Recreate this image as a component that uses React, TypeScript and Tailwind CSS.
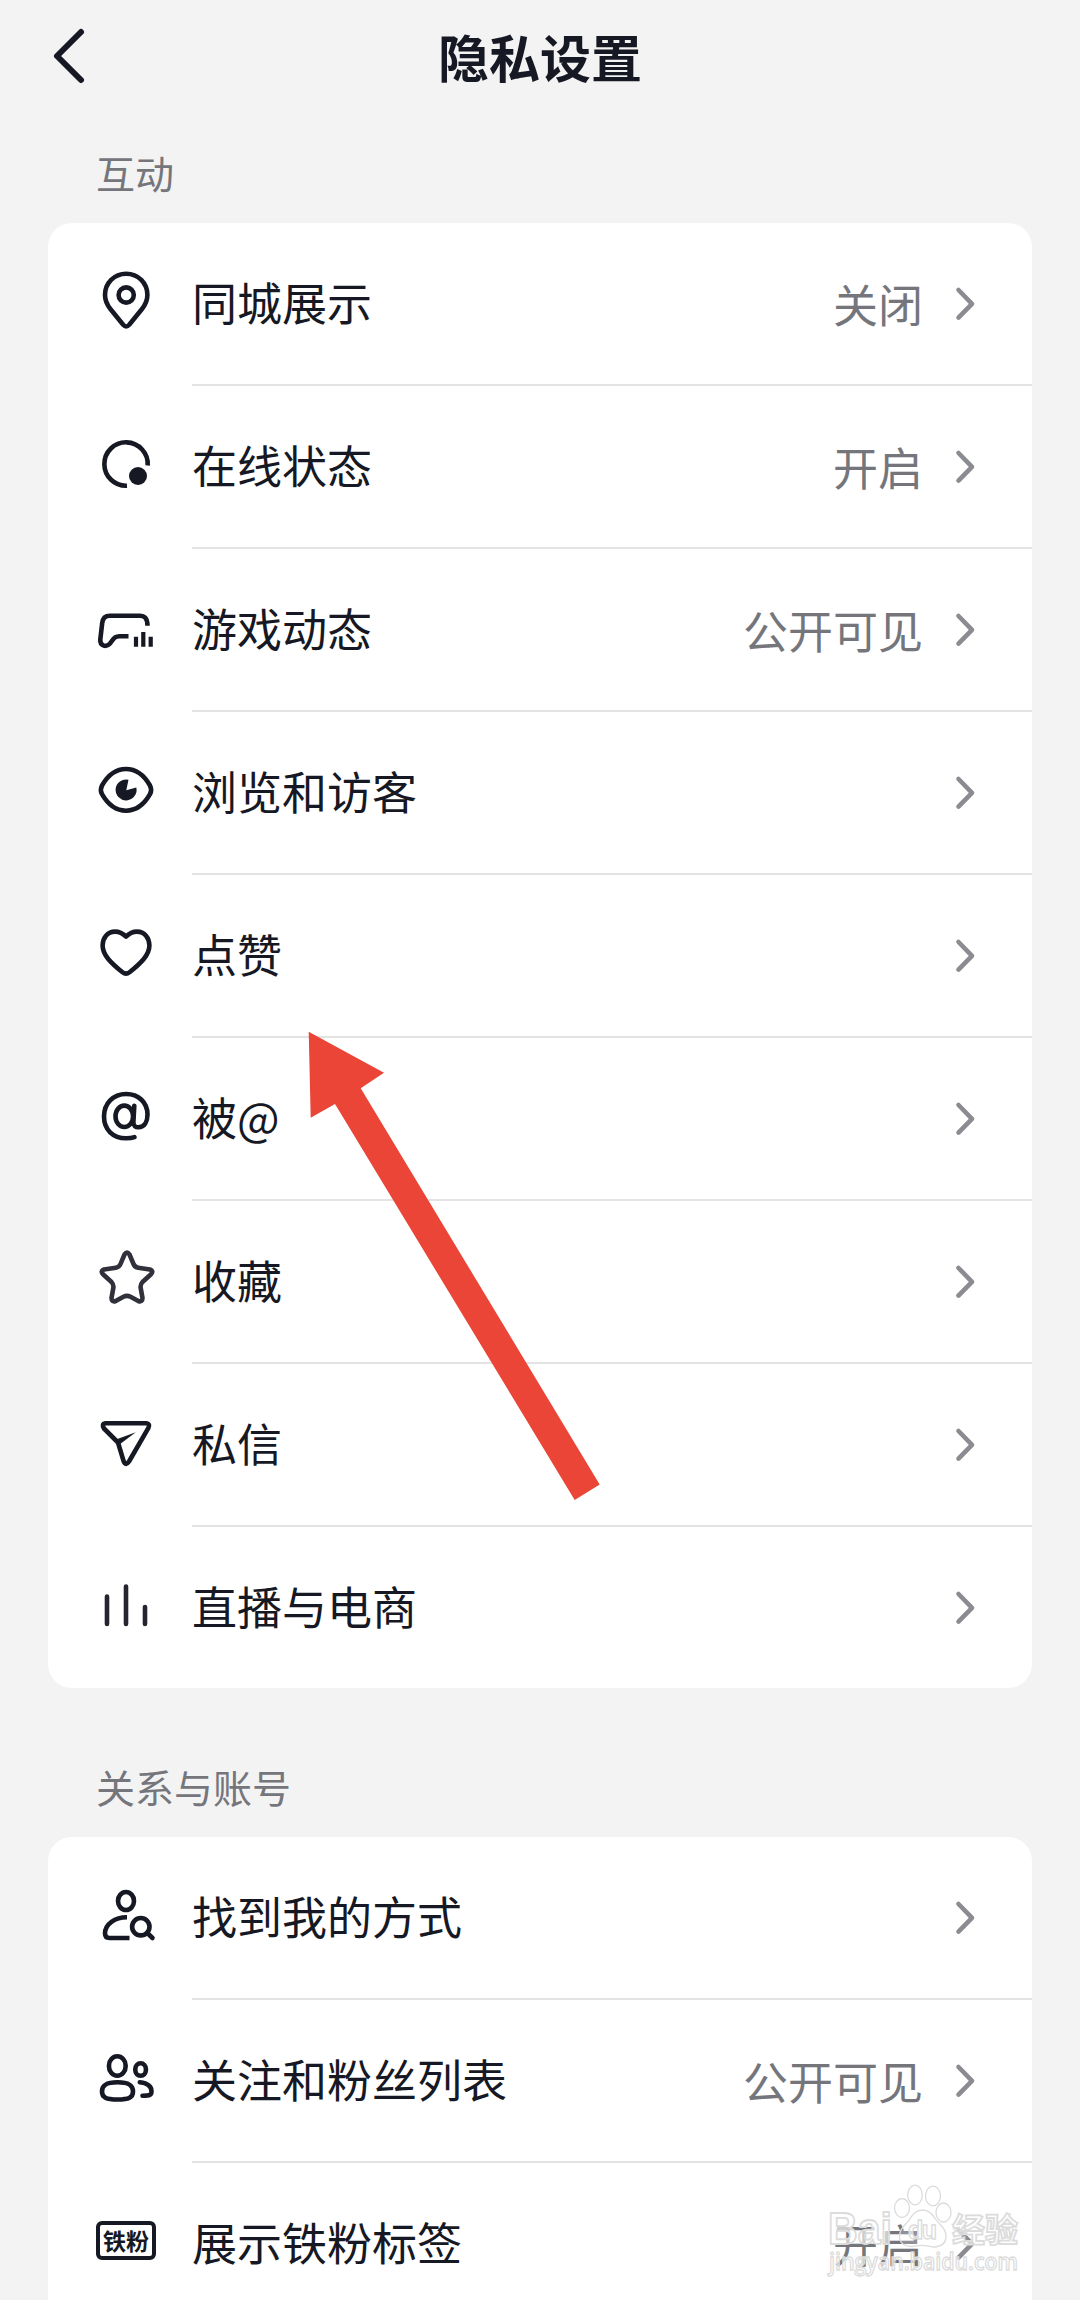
import type { ReactNode } from "react"

type Item = {
  label: string
  icon: ReactNode
  value?: string
}

const Icon = ({ children, className = "text-[#161823]" }: { children: ReactNode; className?: string }) => (
  <svg
    viewBox="0 0 60 60"
    className={`size-[60px] shrink-0 ${className}`}
    fill="none"
    stroke="currentColor"
    strokeWidth={4.6}
    strokeLinejoin="round"
  >
    {children}
  </svg>
)

const interactionItems: Item[] = [
  {
    label: "同城展示",
    value: "关闭",
    icon: (
      <Icon>
        <path d="M30.2 3.7C18.2 3.7 9 13.2 9 25c0 5.8 2 9.8 5.6 14.2L27.2 54.8q3 3.4 6 0L45.8 39.2C49.4 34.8 51.4 30.8 51.4 25 51.4 13.2 42.2 3.7 30.2 3.7Z" />
        <circle cx="30.2" cy="25" r="7.6" />
      </Icon>
    ),
  },
  {
    label: "在线状态",
    value: "开启",
    icon: (
      <Icon>
        <path d="M51.7 32.5A21.7 21.7 0 1 0 31 52.7" />
        <circle cx="42" cy="43" r="9" fill="currentColor" stroke="none" />
      </Icon>
    ),
  },
  {
    label: "游戏动态",
    value: "公开可见",
    icon: (
      <Icon>
        <path d="M51.5 29.7C51.5 22.5 49 19.7 43.5 19.7H14C9 19.7 6.7 22 6.2 27L4.3 43.5C3.8 50.5 10.5 51.5 14 47.5 18 42.5 18.5 40.3 23.5 40.3H32.5" />
        <path strokeWidth={4.2} d="M40 40.7v10M47.3 36v14.7M54.7 40.7v10" />
      </Icon>
    ),
  },
  {
    label: "浏览和访客",
    icon: (
      <Icon>
        <path d="M6 26.5C12 16 20 10 30 10s18 6 24 16.5Q56.3 31 54 35.2C48 45.7 40 51.7 30 51.7S12 45.7 6 35.2Q3.7 31 6 26.5Z" />
        <path
          d="M32.5 20.7 30.3 31.3 40.3 28.5A10.5 10.5 0 1 1 32.5 20.7Z"
          fill="currentColor"
          stroke="none"
        />
      </Icon>
    ),
  },
  {
    label: "点赞",
    icon: (
      <Icon>
        <path d="M30 14.5C26.5 11 23 9.6 19 9.6 11.5 9.6 6.6 15.8 6.6 23.5 6.6 33 15 41 26.5 50.3Q30 53 33.5 50.3C45 41 53.4 33 53.4 23.5 53.4 15.8 48.5 9.6 41 9.6 37 9.6 33.5 11 30 14.5Z" />
      </Icon>
    ),
  },
  {
    label: "被@",
    icon: (
      <Icon>
        <ellipse cx="28.3" cy="31.3" rx="8.8" ry="10.7" />
        <path
          strokeLinecap="round"
          d="M38.3 20.7 37.4 36.5C37.2 41 39.5 42.3 42.5 42.3 48.5 42.3 51.5 36.5 51.5 29.5 51.5 17.5 42.5 9 30.2 9 17 9 8 18.5 8 31.5 8 44.5 17 53.3 30 53.3 34 53.3 36.5 52.9 38.5 52.2"
        />
      </Icon>
    ),
  },
  {
    label: "收藏",
    icon: (
      <Icon className="text-[#30313a]">
        <path d="M28.5 6.5Q31 2.7 33.5 6.5L37.5 16Q38.8 19.2 42.2 19.7L54 21.5Q58 23 55 26.3L46.5 34Q44.3 36.3 44.6 39.5L46.5 50Q46.5 54.5 42.3 53L34.5 48.7Q31 47 27.5 48.7L19.7 53Q15.5 54.5 15.5 50L17.4 39.5Q17.7 36.3 15.5 34L7 26.3Q4 23 8 21.5L19.8 19.7Q23.2 19.2 24.5 16Z" />
      </Icon>
    ),
  },
  {
    label: "私信",
    icon: (
      <Icon>
        <path d="M9.5 12.3H50.5Q54.5 12.8 52.3 17.2L33 50.5Q29.7 55.5 27.6 50.2L22 31.5 8 17.5Q5.2 13 9.5 12.3Z" />
        <path d="M20 28.6 39.8 21.3 23.5 33.5Z" fill="currentColor" stroke="none" />
      </Icon>
    ),
  },
  {
    label: "直播与电商",
    icon: (
      <Icon className="text-[#24252f]">
        <path strokeLinecap="round" d="M11 22.5V50M30 12.5V50M49 33V50" />
      </Icon>
    ),
  },
]

const accountItems: Item[] = [
  {
    label: "找到我的方式",
    icon: (
      <Icon>
        <ellipse cx="30" cy="17" rx="8" ry="9" />
        <path d="M31 33.3C19 33.3 9 40 9 49.5 9 52.5 10.5 54 13.5 54H33.5" />
        <circle cx="44.8" cy="42.7" r="8.7" />
        <path strokeLinecap="round" d="M51.3 49 56.5 54" />
      </Icon>
    ),
  },
  {
    label: "关注和粉丝列表",
    value: "公开可见",
    icon: (
      <Icon>
        <rect x="13" y="9.3" width="16.6" height="19.4" rx="8.3" ry="9" />
        <path d="M21.5 35.3C33 35.3 37 38.5 37 44.5S33 52.5 21.5 52.5 6 50.5 6 44.5 10 35.3 21.5 35.3Z" />
        <rect x="39.3" y="16.3" width="10.6" height="12.5" rx="5.3" ry="5.8" />
        <path
          strokeLinecap="round"
          d="M43.8 35.3C52 36.3 55.5 39 55.5 44.5 55.5 48 54 48.6 46.5 48.8"
        />
      </Icon>
    ),
  },
  {
    label: "展示铁粉标签",
    value: "开启",
    icon: (
      <span className="flex size-[60px] shrink-0 items-center">
        <span className="flex h-[39px] w-[60px] items-center justify-center rounded-md border-4 border-[#161823] text-[23px] leading-none font-bold">
          铁粉
        </span>
      </span>
    ),
  },
]

const Row = ({ item, last }: { item: Item; last: boolean }) => (
  <li className="flex pl-12">
    <div className="w-24 pt-[47px]">{item.icon}</div>
    <div
      className={`flex flex-1 items-center justify-between pr-[56px] ${
        last ? "h-[161px]" : "h-[163px] border-b-2 border-[#e3e3e4]"
      }`}
    >
      <span className="pb-1 text-[45px] leading-[60px]">{item.label}</span>
      <span className="flex items-center gap-[29px]">
        {item.value && (
          <span className="text-[45px] leading-[60px] text-[#75767c]">{item.value}</span>
        )}
        <svg viewBox="0 0 24 36" className="h-9 w-6" fill="none" stroke="#8b8c92" strokeWidth={4.6}>
          <path strokeLinecap="round" strokeLinejoin="round" d="M6.5 4 20 17.8 6.5 31.6" />
        </svg>
      </span>
    </div>
  </li>
)

const Section = ({ title, items }: { title: string; items: Item[] }) => (
  <section className="mx-12">
    <h2 className="flex h-[98px] items-center pb-1 pl-12 text-[39px] text-[#75767c]">{title}</h2>
    <ul className="rounded-3xl bg-white">
      {items.map((item, i) => (
        <Row key={item.label} item={item} last={i === items.length - 1} />
      ))}
    </ul>
  </section>
)

const Watermark = () => (
  <svg
    viewBox="0 0 200 100"
    className="absolute top-[2180px] left-[826px] h-[100px] w-[200px]"
    fill="#ffffff"
    fillOpacity={0.65}
    stroke="#dcdcdc"
    strokeWidth={1.3}
  >
    <ellipse cx="76" cy="28" rx="7.5" ry="9.5" />
    <ellipse cx="89" cy="15" rx="7.3" ry="9.8" />
    <ellipse cx="107" cy="16" rx="7.5" ry="9.8" />
    <ellipse cx="117.5" cy="32.5" rx="7.5" ry="9.5" />
    <path
      fillOpacity={0.2}
      d="M96.5 30C90 30 87 34 83.5 39.5 80 45 73.5 47.5 73.5 56 73.5 63 78.5 66.5 84.5 66.5 89 66.5 92 65.3 96.5 65.3S104 67 109 67C115.5 66.5 120 63 120 56 120 47.5 113 44 109.5 39 106 34 103 30 96.5 30Z"
    />
    <text
      x="2"
      y="64"
      fontSize="45"
      className="font-['Liberation_Sans',sans-serif] font-bold"
      textLength="64"
      lengthAdjust="spacingAndGlyphs"
      strokeWidth={1.8}
    >
      Bai
    </text>
    <text x="82" y="59" fontSize="25" className="font-['Liberation_Sans',sans-serif] font-bold" textLength="29">
      du
    </text>
    <text x="126" y="62" fontSize="33" className="font-bold" strokeWidth={1.8}>
      经验
    </text>
    <text
      x="3"
      y="90"
      fontSize="23"
      className="font-['Open_Sans',sans-serif] font-semibold"
      textLength="189"
      lengthAdjust="spacingAndGlyphs"
    >
      jingyan.baidu.com
    </text>
  </svg>
)

const App = () => {
  return (
    <main className="relative h-[2300px] w-[1080px] overflow-hidden bg-[#f3f3f3] font-['Noto_Sans_CJK_SC',sans-serif] text-[#161823]">
      <header className="grid h-[125px] grid-cols-[1fr_auto_1fr] items-start pt-[26px]">
        <button className="ml-[50px] w-10" aria-label="返回">
          <svg viewBox="0 0 40 60" className="h-[60px] w-10" fill="none" stroke="currentColor" strokeWidth={6}>
            <path strokeLinecap="round" strokeLinejoin="round" d="M31 6 7 30 31 54" />
          </svg>
        </button>
        <h1 className="-mt-0.5 text-[51px] leading-[64px] font-bold">隐私设置</h1>
      </header>

      <div className="flex flex-col gap-[51px]">
        <Section title="互动" items={interactionItems} />
        <Section title="关系与账号" items={accountItems} />
      </div>

      <svg viewBox="0 0 300 480" className="absolute top-[1025px] left-[300px] h-[480px] w-[300px]" fill="#ea4536">
        <path d="M8.7 6.7 84 47.7 60.7 63.3 299.7 459.5 274.7 475 35 79 10.7 92.7Z" />
      </svg>

      <Watermark />
    </main>
  )
}

export default App
